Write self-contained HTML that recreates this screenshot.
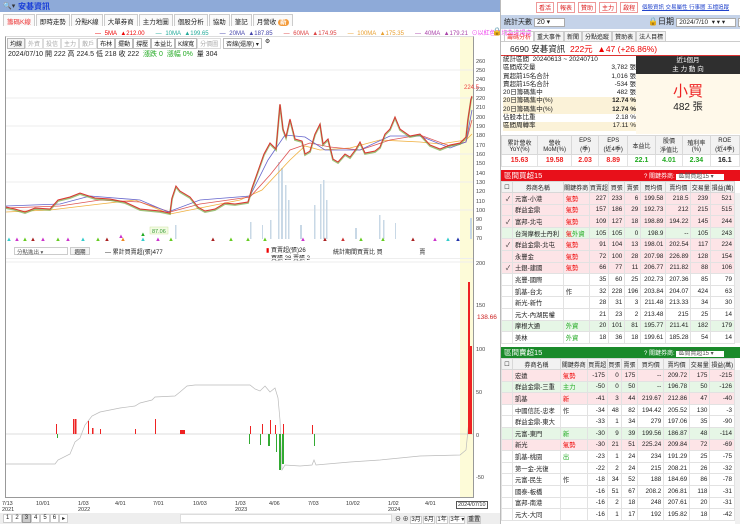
<!DOCTYPE html>
<html><head><meta charset="utf-8"><style>
*{margin:0;padding:0;box-sizing:border-box}
body{width:740px;height:524px;overflow:hidden;background:#fff;font-family:"Liberation Sans","Noto Sans CJK TC",sans-serif;font-size:7px;color:#222;position:relative}
.a{position:absolute}
.hdr{left:0;top:0;width:500px;height:12px;background:#8eaad8}
.tabs{left:3px;top:14px;height:12px;display:flex;white-space:nowrap}
.tabs span{border:1px solid #ccc;border-bottom:none;padding:1px 3px;margin-right:1px;font-size:6.5px;background:#fafafa;height:12px}
table{border-collapse:collapse;font-size:6.3px}
td{border:1px solid #e2e2e2;height:11.6px;padding:0 2px;text-align:right;white-space:nowrap;overflow:hidden}
td.n{text-align:left}
th{border:1px solid #d8d8d8;background:#f2f2f2;font-weight:normal;height:11px;font-size:6px}
.p td{background:#fde4e7}.g td{background:#e6f6e6}
.r{color:#e00}.gr{color:#2a2}
.cb{width:11px}
</style></head><body>
<div class="a hdr"></div>
<div class="a" style="left:3px;top:2px;font-size:7px;color:#333">🔍▾</div>
<div class="a" style="left:18px;top:1px;font-size:8px;color:#1a3fd8;font-weight:bold">安碁資訊</div>
<div class="a tabs"><span style="color:#e33">籌碼K線</span><span>即時走勢</span><span>分點K線</span><span>大單券商</span><span>主力地圖</span><span>個股分析</span><span>協助</span><span>筆記</span><span>月營收 <b style="background:#f39a3a;color:#fff;border-radius:4px;padding:0 2px">新</b></span></div>
<div class="a" style="top:28px;left:95px;font-size:6px;white-space:nowrap;word-spacing:2px"><span class="r">— 5MA ▲212.00</span>&nbsp;&nbsp; <span style="color:#2a9">— 10MA ▲199.65</span>&nbsp;&nbsp; <span style="color:#44a">— 20MA ▲187.85</span>&nbsp;&nbsp; <span style="color:#d44">— 60MA ▲174.95</span>&nbsp;&nbsp; <span style="color:#e9a030">— 100MA ▲175.35</span>&nbsp;&nbsp; <span style="color:#a4a">— 40MA ▲179.21</span> <span style="color:#e4e">⊙以紅色區塊為進場處</span></div>
<div class="a" style="left:492px;top:27px;font-size:8px">🔒</div>
<div class="a" style="left:5px;top:36px;width:469px;height:462px;border:1px solid #999;border-top:1px solid #ddd"></div>
<div class="a" style="left:460px;top:37px;width:13px;height:460px;background:#fdfbd8"></div>
<div class="a" style="left:7px;top:38px;display:flex;font-size:6px;white-space:nowrap">
<span style="border:1px solid #bbb;padding:0 2px;background:#f5f5f5">均線</span><span style="border:1px solid #ddd;padding:0 2px;color:#aaa">外資</span><span style="border:1px solid #ddd;padding:0 2px;color:#aaa">投信</span><span style="border:1px solid #ddd;padding:0 2px;color:#aaa">主力</span><span style="border:1px solid #ddd;padding:0 2px;color:#aaa">散戶</span><span style="border:1px solid #bbb;padding:0 2px">布林</span><span style="border:1px solid #bbb;padding:0 2px">擺動</span><span style="border:1px solid #bbb;padding:0 2px">撐壓</span><span style="border:1px solid #bbb;padding:0 2px">本益比</span><span style="border:1px solid #bbb;padding:0 2px">K線寬</span><span style="border:1px solid #ddd;padding:0 2px;color:#aaa">分價圖</span><span style="border:1px solid #bbb;padding:0 2px;margin-left:2px">否線(還原) ▾</span><span style="margin-left:3px">⚙</span></div>
<div class="a" style="left:8px;top:49px;font-size:7px;white-space:nowrap">2024/07/10 開 222 高 224.5 低 218 收 222 &nbsp;<span class="gr">漲跌 0 &nbsp;漲幅 0%</span> &nbsp;量 304</div>
<svg class="a" style="left:0;top:36px" width="500" height="464" viewBox="0 36 500 464">
<g stroke="#eee" stroke-width="1">
<line x1="6" x2="473" y1="70" y2="70"/><line x1="6" x2="473" y1="98" y2="98"/><line x1="6" x2="473" y1="126" y2="126"/><line x1="6" x2="473" y1="154" y2="154"/><line x1="6" x2="473" y1="182" y2="182"/><line x1="6" x2="473" y1="210" y2="210"/><line x1="6" x2="473" y1="262" y2="262"/>
</g>
<g font-size="5.5" fill="#444">
<text x="476" y="63">260</text><text x="476" y="72">250</text><text x="476" y="81">240</text><text x="476" y="91">230</text><text x="476" y="100">220</text><text x="476" y="109">210</text><text x="476" y="119">200</text><text x="476" y="128">190</text><text x="476" y="137">180</text><text x="476" y="147">170</text><text x="476" y="156">160</text><text x="476" y="165">150</text><text x="476" y="175">140</text><text x="476" y="184">130</text><text x="476" y="193">120</text><text x="476" y="203">110</text><text x="476" y="212">100</text><text x="476" y="221">90</text><text x="476" y="230">80</text><text x="476" y="240">70</text>
<text x="476" y="265">200</text><text x="476" y="307">150</text><text x="476" y="351">100</text><text x="476" y="394">50</text><text x="476" y="437">0</text><text x="476" y="479">-50</text>
</g>
<text x="464" y="89" font-size="6" fill="#e44">224.5</text>
<text x="477" y="319" font-size="6.5" fill="#c22">138.66</text>
<g fill="#c8d8e6">
<rect x="175" y="225" width="1.5" height="14"/><rect x="250" y="222" width="1.5" height="17"/><rect x="262" y="225" width="1" height="14"/><rect x="278" y="162" width="1.5" height="77"/><rect x="281" y="168" width="2" height="71"/><rect x="285" y="185" width="1.5" height="54"/><rect x="288" y="200" width="1.5" height="39"/><rect x="314" y="205" width="1.5" height="34"/><rect x="320" y="184" width="1.5" height="55"/><rect x="323" y="180" width="1.5" height="59"/><rect x="326" y="200" width="1.5" height="39"/><rect x="379" y="215" width="1.5" height="24"/><rect x="383" y="220" width="1.5" height="19"/><rect x="395" y="223" width="1" height="16"/><rect x="270" y="220" width="1.5" height="19"/><rect x="470" y="218" width="2" height="21"/><rect x="300" y="225" width="2" height="14"/><rect x="355" y="228" width="2" height="11"/>
</g>
<polyline fill="none" stroke="#f0b040" stroke-width="0.8" points="6,212 50,210 100,204 135,200 170,214 200,208 240,200 262,190 290,160 305,146 320,150 350,148 380,140 420,142 440,144 466,140 472,134"/>
<polyline fill="none" stroke="#d55" stroke-width="0.8" points="6,208 60,206 100,200 140,202 170,212 200,204 250,197 270,175 290,150 310,143 330,147 360,150 390,140 420,135 450,146 466,142 472,120"/>
<polyline fill="none" stroke="#66c" stroke-width="0.8" points="6,206 60,204 90,196 140,200 168,212 200,200 250,196 268,160 285,135 305,137 325,150 360,150 390,136 420,136 450,148 466,142 472,110"/>
<polyline fill="none" stroke="#7a4" stroke-width="1.8" opacity="0.7" points="6,208 15,210 25,213 35,209 50,210 58,201 70,198 80,194 95,199 110,200 125,203 140,210 160,212 170,214 172,199 176,187 180,192 190,198 198,208 205,212 215,210 225,204 235,205 248,203 252,189 258,172 264,155 270,144 276,150 280,105 283,130 286,138 290,120 295,140 302,142 305,155 310,152 315,135 320,125 323,145 328,140 333,160 338,163 345,155 350,158 356,150 360,143 365,154 375,152 380,148 385,135 390,130 395,118 400,130 410,137 420,135 430,146 440,150 450,146 460,144 466,138 468,120 471,100 472,97"/>
<polyline fill="none" stroke="#d33" stroke-width="1" points="6,207 15,209 25,212 35,208 50,209 58,200 70,197 80,193 95,198 110,199 125,202 140,209 160,211 170,213 172,198 176,186 180,191 190,197 198,207 205,211 215,209 225,203 235,204 248,202 252,188 258,171 264,154 270,143 276,149 280,104 283,129 286,137 290,119 295,139 302,141 305,154 310,151 315,134 320,124 323,144 328,139 333,159 338,162 345,154 350,157 356,149 360,142 365,153 375,151 380,147 385,134 390,129 395,117 400,129 410,136 420,134 430,145 440,149 450,145 460,143 466,137 468,119 471,99 472,96"/>
<g font-size="6">
<text x="6" y="241" fill="#3cc">▲</text><text x="14" y="241" fill="#c3c">▲</text><text x="22" y="241" fill="#6c2">▲</text><text x="30" y="241" fill="#a22">▲</text><text x="40" y="241" fill="#c3c">▲</text><text x="55" y="241" fill="#6c2">▲</text><text x="65" y="241" fill="#c3c">▲</text><text x="80" y="241" fill="#3cc">▲</text><text x="95" y="241" fill="#6c2">▲</text><text x="104" y="241" fill="#a22">▲</text><text x="118" y="238" fill="#c3c">▲</text><text x="120" y="241" fill="#e82">▲</text><text x="140" y="241" fill="#3cc">▲</text><text x="140" y="236" fill="#2a2">▲</text><text x="155" y="241" fill="#c3c">▲</text><text x="168" y="241" fill="#6c2">▲</text><text x="210" y="241" fill="#a22">▲</text><text x="228" y="241" fill="#6c2">▲</text><text x="245" y="241" fill="#6c2">▲</text><text x="262" y="241" fill="#6c2">▲</text><text x="300" y="241" fill="#c3c">▲</text><text x="322" y="241" fill="#a22">▲</text><text x="340" y="241" fill="#c33">▲</text><text x="358" y="241" fill="#6c2">▲</text><text x="380" y="241" fill="#6c2">▲</text><text x="410" y="241" fill="#a22">▲</text><text x="432" y="241" fill="#c3c">▲</text><text x="445" y="241" fill="#3cc">▲</text><text x="455" y="241" fill="#23a">▲</text>
</g>
<rect x="150" y="227" width="18" height="7" fill="#f3fbe3" stroke="#cde5a0" stroke-width="0.5"/><text x="152" y="233" font-size="5.5" fill="#393">87.06</text>
<line x1="6" x2="473" y1="434" y2="434" stroke="#bbb" stroke-width="0.6"/>
<polyline fill="none" stroke="#bbb" stroke-width="0.7" points="6,464 55,464 58,460 70,454 75,442 80,438 85,425 92,416 100,412 120,408 135,406 140,403 152,400 155,397 175,396 180,392 187,386 195,385 250,385 255,389 260,391 265,386 270,392 275,388 278,398 280,420 282,470 285,465 300,466 312,465 314,460 316,465 350,462 380,460 420,456 460,455 466,450 469,420"/>
<g fill="#e22">
<rect x="56" y="424" width="1" height="10"/><rect x="73" y="419" width="1.5" height="15"/><rect x="75" y="419" width="1.5" height="15"/><rect x="88" y="421" width="1" height="13"/><rect x="92" y="428" width="1.5" height="6"/><rect x="100" y="429" width="1" height="5"/><rect x="135" y="429" width="1" height="5"/><rect x="155" y="419" width="1" height="15"/><rect x="180" y="430" width="5" height="4"/><rect x="250" y="426" width="1" height="8"/><rect x="262" y="424" width="1" height="10"/><rect x="270" y="420" width="1" height="14"/><rect x="275" y="425" width="1" height="9"/><rect x="283" y="424" width="1" height="10"/><rect x="312" y="425" width="1" height="9"/><rect x="468" y="282" width="2" height="152"/><rect x="470" y="346" width="2" height="88"/>
</g>
<g fill="#3a3">
<rect x="249" y="434" width="1" height="10"/><rect x="260" y="434" width="1" height="11"/><rect x="268" y="434" width="2" height="12"/><rect x="276" y="434" width="1" height="18"/><rect x="279" y="434" width="2" height="36"/><rect x="282" y="434" width="2" height="30"/><rect x="314" y="434" width="1" height="12"/><rect x="57" y="434" width="1" height="4"/>
</g>
</svg>
<div class="a" style="left:14px;top:247px;width:54px;height:8px;border:1px solid #ccc;font-size:5.5px;padding-left:2px;color:#555">分點進出 ▾</div>
<div class="a" style="left:70px;top:247px;width:20px;height:8px;border:1px solid #ccc;font-size:5.5px;text-align:center;background:#f5f5f5">週期</div>
<div class="a" style="left:105px;top:247px;font-size:6px">— 累計買賣超(張)477</div>
<div class="a" style="left:266px;top:247px;font-size:6px;line-height:8px"><span class="r">▮</span> 買賣超(張)26<br>&nbsp;&nbsp;&nbsp;買張 28 賣張 2</div>
<div class="a" style="left:333px;top:247px;font-size:6px;white-space:nowrap">統計期間買賣比 買 &nbsp;&nbsp;&nbsp;&nbsp;&nbsp;&nbsp;&nbsp;&nbsp;&nbsp;&nbsp;&nbsp;&nbsp;&nbsp;&nbsp;&nbsp;&nbsp;&nbsp;&nbsp;&nbsp;&nbsp;&nbsp;賣</div>
<div class="a" style="left:6px;top:258px;width:467px;border-top:1px solid #eee"></div>
<div class="a" style="top:501px;left:0;width:500px;font-size:5.5px;line-height:6px;color:#333">
<span class="a" style="left:2px">7/13<br>2021</span><span class="a" style="left:36px">10/01</span><span class="a" style="left:78px">1/03<br>2022</span><span class="a" style="left:115px">4/01</span><span class="a" style="left:153px">7/01</span><span class="a" style="left:193px">10/03</span><span class="a" style="left:235px">1/03<br>2023</span><span class="a" style="left:269px">4/06</span><span class="a" style="left:308px">7/03</span><span class="a" style="left:346px">10/02</span><span class="a" style="left:388px">1/02<br>2024</span><span class="a" style="left:425px">4/01</span><span class="a" style="left:456px;border:1px solid #555;padding:0 1px">2024/07/10</span></div>
<div class="a" style="top:513px;left:0;width:500px;height:11px;background:#eee"></div>
<div class="a" style="top:514px;left:3px;display:flex;font-size:6px"><span style="border:1px solid #ccc;padding:0 2px;background:#fff">1</span><span style="border:1px solid #ccc;padding:0 2px;background:#fff">2</span><span style="border:1px solid #999;padding:0 2px;background:#ccc">3</span><span style="border:1px solid #ccc;padding:0 2px;background:#fff">4</span><span style="border:1px solid #ccc;padding:0 2px;background:#fff">5</span><span style="border:1px solid #ccc;padding:0 2px;background:#fff">6</span><span style="border:1px solid #ccc;padding:0 2px;background:#fff">▸</span></div>
<div class="a" style="top:514px;left:180px;width:212px;height:9px;background:#fff;border:1px solid #ddd"></div>
<div class="a" style="top:514px;left:395px;font-size:6px;white-space:nowrap">⊖ ⊕ <span style="border:1px solid #ccc;background:#fff">3月</span> <span style="border:1px solid #ccc;background:#fff">6月</span> <span style="border:1px solid #ccc;background:#fff">1年</span> <span style="border:1px solid #ccc;background:#fff">3年 ▾</span> <span style="border:1px solid #ccc;background:#ddd">重置</span></div>

<div class="a" style="left:500px;top:0;width:240px;height:524px;border-left:1px solid #bbb"></div>
<div class="a" style="left:536px;top:2px;display:flex;font-size:6px;gap:3px;white-space:nowrap"><span style="border:1px solid #e99;color:#d22;padding:0 2px">看活</span><span style="border:1px solid #e99;color:#d22;padding:0 2px">報表</span><span style="border:1px solid #e99;color:#d22;padding:0 2px">贊助</span><span style="border:1px solid #e99;color:#d22;padding:0 2px">主力</span><span style="border:1px solid #e99;color:#d22;padding:0 2px">啟程</span></div>
<div class="a" style="left:642px;top:3px;font-size:5.5px;color:#24c;text-decoration:underline;white-space:nowrap">個股資訊 交易屬性 行事曆 五檔追蹤</div>
<div class="a" style="left:501px;top:15px;width:239px;height:14px;background:#c5d3e9"></div>
<div class="a" style="left:504px;top:17px;font-size:7px;white-space:nowrap">統計天數 <span style="background:#fff;border:1px solid #aaa;padding:0 14px 0 2px">20 ▾</span></div>
<div class="a" style="left:648px;top:16px;font-size:8px;white-space:nowrap">🔒日期 <span style="font-size:6.5px;background:#fff;border:1px solid #aaa;padding:0 10px 0 2px">2024/7/10 &nbsp;▾ ▾ ▾</span> <span style="font-size:6.5px;background:#fff;border:1px solid #aaa">今天</span></div>
<div class="a" style="left:504px;top:31px;display:flex;font-size:6px;white-space:nowrap"><span style="border:1px solid #ccc;padding:0 2px;color:#e33">籌碼分析</span><span style="border:1px solid #ccc;padding:0 2px;background:#f3f3f3">重大事件</span><span style="border:1px solid #ccc;padding:0 2px;background:#f3f3f3">新聞</span><span style="border:1px solid #ccc;padding:0 2px;background:#f3f3f3">分點追蹤</span><span style="border:1px solid #ccc;padding:0 2px;background:#f3f3f3">贊助表</span><span style="border:1px solid #ccc;padding:0 2px;background:#f3f3f3">法人目標</span></div>
<div class="a" style="left:501px;top:41px;width:239px;height:15px;border-bottom:1px solid #d33;border-top:1px solid #ccc"></div>
<div class="a" style="left:510px;top:43px;font-size:8.5px;white-space:nowrap">6690 安碁資訊 &nbsp;<span class="r">222元 &nbsp;▲47 (+26.86%)</span></div>
<div class="a" style="left:503px;top:56px;width:133px;font-size:6.5px;line-height:8.3px">
<div>統計區間 &nbsp;20240613 ~ 20240710</div>
<div>區間成交量<span style="float:right">3,782 張</span></div>
<div>買超前15名合計<span style="float:right">1,016 張</span></div>
<div>賣超前15名合計<span style="float:right">-534 張</span></div>
<div>20日籌碼集中<span style="float:right">482 張</span></div>
<div style="background:#fbf2d8">20日籌碼集中(%)<span style="float:right;font-weight:bold">12.74 %</span></div>
<div style="background:#fbf2d8">20日籌碼集中(%)<span style="float:right;font-weight:bold">12.74 %</span></div>
<div>佔股本比重<span style="float:right">2.18 %</span></div>
<div style="background:#fbf2d8">區間周轉率<span style="float:right">17.11 %</span></div>
</div>
<div class="a" style="left:636px;top:56px;width:104px;height:18px;background:#2f2f2f;color:#fff;text-align:center;font-size:6.5px;line-height:9px">近1個月<br>主 力 動 向</div>
<div class="a" style="left:636px;top:74px;width:104px;height:60px;background:#fff9ea"></div>
<div class="a" style="left:636px;top:80px;width:104px;text-align:center;font-size:15px;color:#e22">小買</div>
<div class="a" style="left:636px;top:98px;width:104px;text-align:center;font-size:10px">482 張</div>
<table class="a" style="left:501px;top:135px;width:239px;font-size:5.5px;text-align:center">
<tr style="height:17px"><th>累計營收<br>YoY(%)</th><th>營收<br>MoM(%)</th><th>EPS<br>(季)</th><th>EPS<br>(近4季)</th><th>本益比</th><th>股價<br>淨值比</th><th>殖利率<br>(%)</th><th>ROE<br>(近4季)</th></tr>
<tr style="font-weight:bold;font-size:7px"><td style="text-align:center;color:#e22">15.63</td><td style="text-align:center;color:#e22">19.58</td><td style="text-align:center;color:#e22">2.03</td><td style="text-align:center;color:#e22">8.89</td><td style="text-align:center;color:#2a2">22.1</td><td style="text-align:center;color:#2a2">4.01</td><td style="text-align:center;color:#2a2">2.34</td><td style="text-align:center">16.1</td></tr>
</table>
<div class="a" style="left:501px;top:170px;width:239px;height:11px;background:#e8101a;color:#fff;font-size:7.5px;padding-left:3px">區間買超15<span style="position:absolute;left:143px;top:1px;font-size:6px;white-space:nowrap">? 關鍵券商: <span style="background:#fff;color:#555;padding:0 10px 0 2px">區間買超15 ▾</span></span></div>
<table class="a" style="left:501px;top:181px;width:234px">
<tr><th class="cb">☐</th><th>券商名稱</th><th>關鍵券商</th><th>買賣超</th><th>買張</th><th>賣張</th><th>買均價</th><th>賣均價</th><th>交易量</th><th>損益(萬)</th></tr>
<tr class="p"><td>✓</td><td class="n">元富-小港</td><td class="n r">氣勢</td><td>227</td><td>233</td><td>6</td><td>199.58</td><td>218.5</td><td>239</td><td>521</td></tr>
<tr class="p"><td></td><td class="n">群益金鼎</td><td class="n r">氣勢</td><td>157</td><td>186</td><td>29</td><td>192.73</td><td>212</td><td>215</td><td>515</td></tr>
<tr class="p"><td>✓</td><td class="n">富邦-北屯</td><td class="n r">氣勢</td><td>109</td><td>127</td><td>18</td><td>198.89</td><td>194.22</td><td>145</td><td>244</td></tr>
<tr class="g"><td></td><td class="n">台灣摩根士丹利</td><td class="n r">氣<span class="gr">外資</span></td><td>105</td><td>105</td><td>0</td><td>198.9</td><td>--</td><td>105</td><td>243</td></tr>
<tr class="p"><td>✓</td><td class="n">群益金鼎-北屯</td><td class="n r">氣勢</td><td>91</td><td>104</td><td>13</td><td>198.01</td><td>202.54</td><td>117</td><td>224</td></tr>
<tr class="p"><td></td><td class="n">永豐金</td><td class="n r">氣勢</td><td>72</td><td>100</td><td>28</td><td>207.98</td><td>226.89</td><td>128</td><td>154</td></tr>
<tr class="p"><td>✓</td><td class="n">土銀-建國</td><td class="n r">氣勢</td><td>66</td><td>77</td><td>11</td><td>206.77</td><td>211.82</td><td>88</td><td>106</td></tr>
<tr><td></td><td class="n">兆豐-國際</td><td class="n"></td><td>35</td><td>60</td><td>25</td><td>202.73</td><td>207.36</td><td>85</td><td>79</td></tr>
<tr><td></td><td class="n">凱基-台北</td><td class="n">作</td><td>32</td><td>228</td><td>196</td><td>203.84</td><td>204.07</td><td>424</td><td>63</td></tr>
<tr><td></td><td class="n">新光-新竹</td><td class="n"></td><td>28</td><td>31</td><td>3</td><td>211.48</td><td>213.33</td><td>34</td><td>30</td></tr>
<tr><td></td><td class="n">元大-內湖民權</td><td class="n"></td><td>21</td><td>23</td><td>2</td><td>213.48</td><td>215</td><td>25</td><td>14</td></tr>
<tr class="g"><td></td><td class="n">摩根大通</td><td class="n gr">外資</td><td>20</td><td>101</td><td>81</td><td>195.77</td><td>211.41</td><td>182</td><td>179</td></tr>
<tr><td></td><td class="n">美林</td><td class="n gr">外資</td><td>18</td><td>36</td><td>18</td><td>199.61</td><td>185.28</td><td>54</td><td>14</td></tr>
</table>
<div class="a" style="left:501px;top:347px;width:239px;height:11px;background:#1a8a2a;color:#fff;font-size:7.5px;padding-left:3px">區間賣超15<span style="position:absolute;left:143px;top:1px;font-size:6px;white-space:nowrap">? 關鍵券商: <span style="background:#fff;color:#555;padding:0 10px 0 2px">區間賣超15 ▾</span></span></div>
<table class="a" style="left:501px;top:358px;width:234px">
<tr><th class="cb">☐</th><th>券商名稱</th><th>關鍵券商</th><th>買賣超</th><th>買張</th><th>賣張</th><th>買均價</th><th>賣均價</th><th>交易量</th><th>損益(萬)</th></tr>
<tr class="p"><td></td><td class="n">宏遠</td><td class="n r">氣勢</td><td>-175</td><td>0</td><td>175</td><td>--</td><td>209.72</td><td>175</td><td>-215</td></tr>
<tr class="g"><td></td><td class="n">群益金鼎-三重</td><td class="n gr">主力</td><td>-50</td><td>0</td><td>50</td><td>--</td><td>196.78</td><td>50</td><td>-126</td></tr>
<tr class="p"><td></td><td class="n">凱基</td><td class="n r">新</td><td>-41</td><td>3</td><td>44</td><td>219.67</td><td>212.86</td><td>47</td><td>-40</td></tr>
<tr><td></td><td class="n">中國信託-忠孝</td><td class="n">作</td><td>-34</td><td>48</td><td>82</td><td>194.42</td><td>205.52</td><td>130</td><td>-3</td></tr>
<tr><td></td><td class="n">群益金鼎-東大</td><td class="n"></td><td>-33</td><td>1</td><td>34</td><td>279</td><td>197.06</td><td>35</td><td>-90</td></tr>
<tr class="g"><td></td><td class="n">元富-東門</td><td class="n gr">新</td><td>-30</td><td>9</td><td>39</td><td>199.56</td><td>186.87</td><td>48</td><td>-114</td></tr>
<tr class="p"><td></td><td class="n">新光</td><td class="n r">氣勢</td><td>-30</td><td>21</td><td>51</td><td>225.24</td><td>209.84</td><td>72</td><td>-69</td></tr>
<tr><td></td><td class="n">凱基-桃園</td><td class="n gr">出</td><td>-23</td><td>1</td><td>24</td><td>234</td><td>191.29</td><td>25</td><td>-75</td></tr>
<tr><td></td><td class="n">第一金-光復</td><td class="n"></td><td>-22</td><td>2</td><td>24</td><td>215</td><td>208.21</td><td>26</td><td>-32</td></tr>
<tr><td></td><td class="n">元富-民生</td><td class="n">作</td><td>-18</td><td>34</td><td>52</td><td>188</td><td>184.69</td><td>86</td><td>-78</td></tr>
<tr><td></td><td class="n">國泰-板橋</td><td class="n"></td><td>-16</td><td>51</td><td>67</td><td>208.2</td><td>206.81</td><td>118</td><td>-31</td></tr>
<tr><td></td><td class="n">富邦-南港</td><td class="n"></td><td>-16</td><td>2</td><td>18</td><td>248</td><td>207.61</td><td>20</td><td>-31</td></tr>
<tr><td></td><td class="n">元大-大同</td><td class="n"></td><td>-16</td><td>1</td><td>17</td><td>192</td><td>195.82</td><td>18</td><td>-42</td></tr>
</table>
<div class="a" style="left:735px;top:193px;width:5px;height:150px;background:#f0f0f0"></div>
<div class="a" style="left:735px;top:370px;width:5px;height:154px;background:#f0f0f0"></div>
</body></html>
